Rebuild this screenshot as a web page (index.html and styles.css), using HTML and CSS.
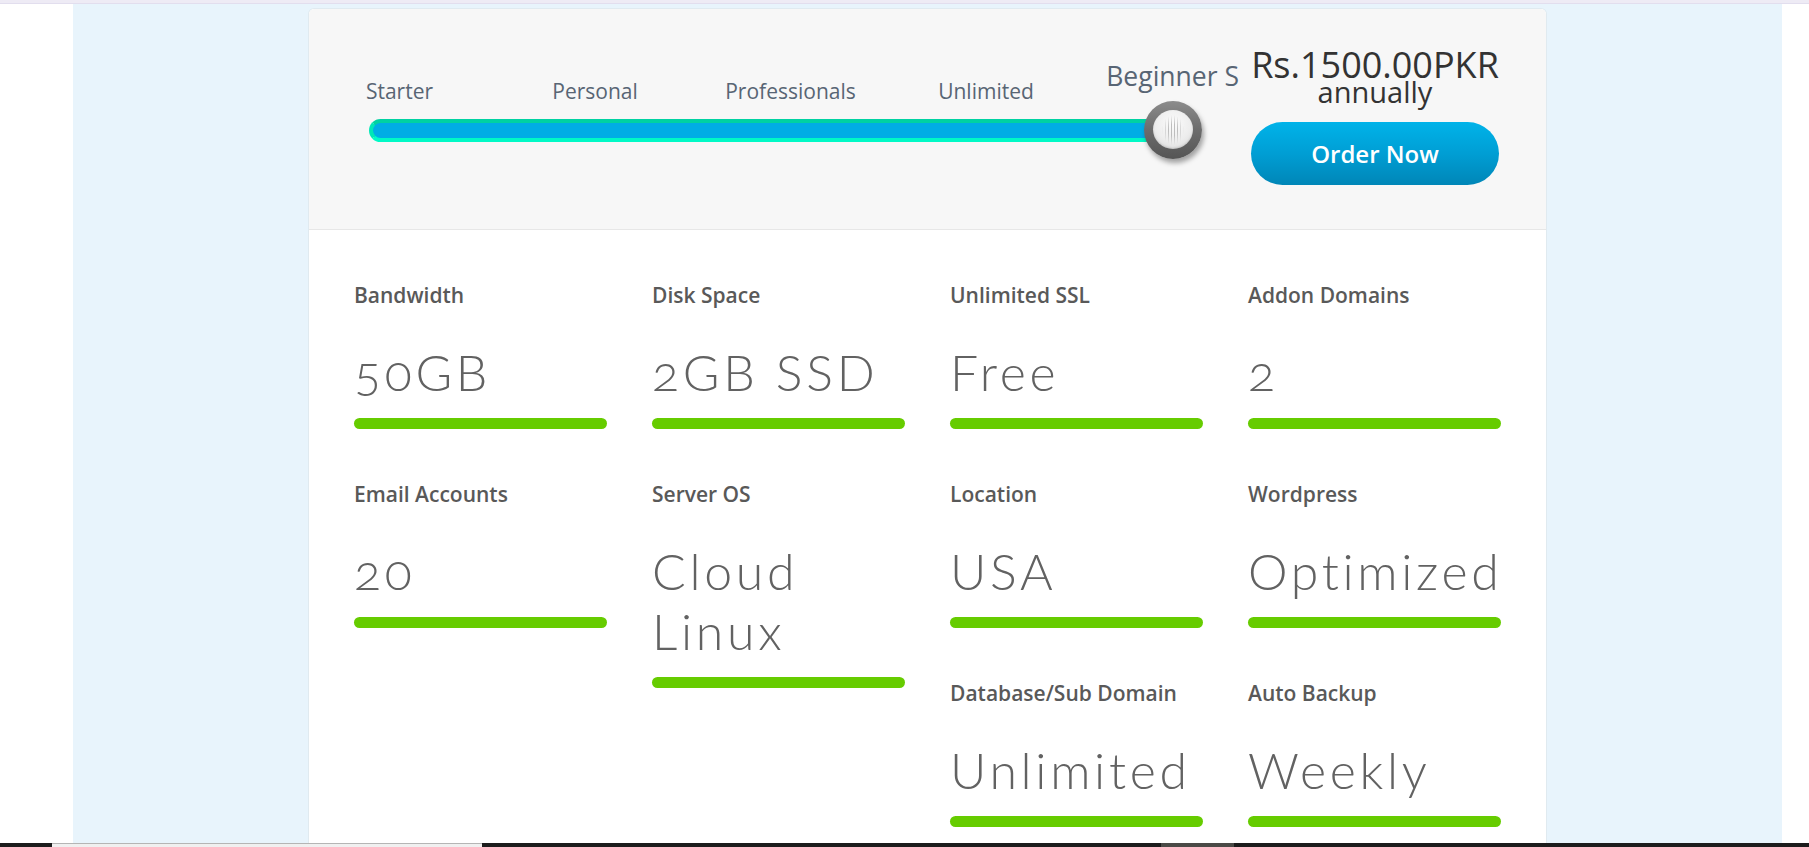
FILE: index.html
```html
<!DOCTYPE html>
<html lang="en">
<head>
<meta charset="utf-8">
<title>Hosting Plans</title>
<link rel="stylesheet" href="styles.css">
</head>
<body>
<div class="topband"></div>
<div class="page">
  <div class="stage">
    <div class="card">
      <div class="card-head">
        <div class="slider">
          <div class="slider-labels">
            <div class="slider-label">Starter</div>
            <div class="slider-label">Personal</div>
            <div class="slider-label">Professionals</div>
            <div class="slider-label">Unlimited</div>
            <div class="slider-label active">Beginner S</div>
          </div>
          <div class="track">
            <div class="thumb"><div class="thumb-face"><div class="thumb-grip"></div></div></div>
          </div>
        </div>
        <div class="price-col">
          <div class="price">Rs.1500.00PKR</div>
          <div class="period">annually</div>
          <a class="order-btn" href="#">Order Now</a>
        </div>
      </div>
      <div class="features">
        <div class="feat-col">
          <div class="feat">
            <div class="feat-label">Bandwidth</div>
            <div class="feat-value">50GB</div>
            <div class="feat-bar"></div>
          </div>
          <div class="feat">
            <div class="feat-label">Email Accounts</div>
            <div class="feat-value">20</div>
            <div class="feat-bar"></div>
          </div>
        </div>
        <div class="feat-col">
          <div class="feat">
            <div class="feat-label">Disk Space</div>
            <div class="feat-value">2GB SSD</div>
            <div class="feat-bar"></div>
          </div>
          <div class="feat">
            <div class="feat-label">Server OS</div>
            <div class="feat-value">Cloud Linux</div>
            <div class="feat-bar"></div>
          </div>
        </div>
        <div class="feat-col">
          <div class="feat">
            <div class="feat-label">Unlimited SSL</div>
            <div class="feat-value">Free</div>
            <div class="feat-bar"></div>
          </div>
          <div class="feat">
            <div class="feat-label">Location</div>
            <div class="feat-value">USA</div>
            <div class="feat-bar"></div>
          </div>
          <div class="feat">
            <div class="feat-label">Database/Sub Domain</div>
            <div class="feat-value">Unlimited</div>
            <div class="feat-bar"></div>
          </div>
        </div>
        <div class="feat-col">
          <div class="feat">
            <div class="feat-label">Addon Domains</div>
            <div class="feat-value">2</div>
            <div class="feat-bar"></div>
          </div>
          <div class="feat">
            <div class="feat-label">Wordpress</div>
            <div class="feat-value">Optimized</div>
            <div class="feat-bar"></div>
          </div>
          <div class="feat">
            <div class="feat-label">Auto Backup</div>
            <div class="feat-value">Weekly</div>
            <div class="feat-bar"></div>
          </div>
        </div>
      </div>
    </div>
  </div>
</div>
<div class="taskbar">
  <div class="tb-gap-a"></div>
  <div class="tb-window"></div>
  <div class="tb-gap-b"></div>
  <div class="tb-tab"></div>
</div>
</body>
</html>
```

FILE: styles.css
```css
* { box-sizing: border-box; }

html, body {
  margin: 0;
  padding: 0;
  height: 847px;
  overflow: hidden;
  background: #ffffff;
  font-family: "Open Sans", "Noto Sans", sans-serif;
}

.topband {
  height: 4px;
  background: #eeebf5;
  border-bottom: 1px solid #e2deee;
}

.page {
  height: 839px;
  display: flex;
  padding-left: 73px;
  padding-right: 27px;
}

.stage {
  flex: 1;
  background: #e8f4fc;
  padding-top: 5px;
  display: flex;
  justify-content: center;
  overflow: hidden;
}

.card {
  width: 1237px;
  height: 834px;
  background: #ffffff;
  border-radius: 5px 5px 0 0;
  box-shadow: 0 0 0 1px #e0eaf0;
  overflow: hidden;
}

/* ---------- header ---------- */
.card-head {
  height: 221px;
  background: #f7f7f7;
  border-bottom: 1px solid #e7e7e7;
  border-radius: 5px 5px 0 0;
  display: flex;
  gap: 11px;
  padding: 0 47px 0 60px;
}

.slider {
  flex: 1;
  min-width: 0;
  padding-top: 67.5px;
}

.slider-labels {
  display: flex;
  align-items: flex-start;
  margin-left: -67.25px;
  height: 28px;
}

.slider-label {
  width: 195.5px;
  flex: none;
  text-align: center;
  white-space: nowrap;
  font-size: 21px;
  line-height: 28px;
  color: #586574;
}

.slider-label.active {
  width: auto;
  margin-left: 22.5px;
  text-align: left;
  font-size: 26.5px;
  transform: translateY(-14.9px);
}

.track {
  position: relative;
  margin-top: 14px;
  width: 821px;
  height: 23px;
  border-radius: 12px;
  background: #00ade5;
  border: 4px solid #00e8b6;
  border-top-color: #00d2a2;
  border-bottom-color: #00f9c6;
}

.thumb {
  position: absolute;
  left: 770.7px;
  top: -22px;
  width: 58px;
  height: 58px;
  border-radius: 50%;
  background: linear-gradient(180deg, #8c8c8c 0%, #6c6c6c 50%, #555555 100%);
  box-shadow: 2px 4px 5px rgba(0, 0, 0, 0.35);
  display: flex;
  align-items: center;
  justify-content: center;
}

.thumb-face {
  width: 40px;
  height: 39px;
  border-radius: 50%;
  background: radial-gradient(circle at 50% 35%, #fbfbfb 0%, #ededed 55%, #d6d6d6 100%);
  box-shadow: inset 0 -1px 2px rgba(0, 0, 0, 0.15);
  display: flex;
  align-items: center;
  justify-content: center;
}

.thumb-grip {
  width: 22px;
  height: 30px;
  background: repeating-linear-gradient(90deg, #bdbdbd 0 1px, transparent 1px 3px);
  -webkit-mask-image: radial-gradient(ellipse 50% 50% at 50% 50%, #000 40%, transparent 100%);
  mask-image: radial-gradient(ellipse 50% 50% at 50% 50%, #000 40%, transparent 100%);
}

.price-col {
  width: 248px;
  flex: none;
  padding-top: 42px;
  text-align: center;
  color: #333333;
}

.price {
  font-size: 36px;
  line-height: 28px;
  white-space: nowrap;
}

.period {
  font-size: 29px;
  line-height: 26px;
}

.order-btn {
  display: block;
  margin-top: 16.7px;
  height: 63px;
  border-radius: 32px;
  background: linear-gradient(180deg, #00b3e9 0%, #009ed4 50%, #0086b7 100%);
  color: #ffffff;
  font-size: 24px;
  font-weight: 600;
  line-height: 63px;
  text-decoration: none;
  text-align: center;
}

/* ---------- features ---------- */
.features {
  display: grid;
  grid-template-columns: repeat(4, 253px);
  column-gap: 45px;
  padding: 50.5px 45px 0 45px;
  align-items: start;
}

.feat-col {
  display: flex;
  flex-direction: column;
}

.feat {
  padding-bottom: 51px;
}

.feat-label {
  font-size: 21px;
  line-height: 28px;
  font-weight: 600;
  color: #595959;
  white-space: nowrap;
}

.feat-value {
  margin-top: 33px;
  font-family: "Lato", "Open Sans", sans-serif;
  font-weight: 300;
  font-size: 50px;
  line-height: 60px;
  letter-spacing: 3.7px;
  color: #626262;
  font-variant-numeric: oldstyle-nums;
}

.feat-bar {
  margin-top: 16px;
  height: 11px;
  border-radius: 6px;
  background: #66cc00;
}

/* ---------- bottom strip ---------- */
.taskbar {
  height: 4px;
  display: flex;
  background: #1c1c1c;
}

.tb-gap-a { width: 52px; }
.tb-window { width: 430px; background: #f0f0f0; border-top: 1px solid #b5b5b5; }
.tb-gap-b { width: 679px; }
.tb-tab { width: 73px; background: #4a4a46; }
```
